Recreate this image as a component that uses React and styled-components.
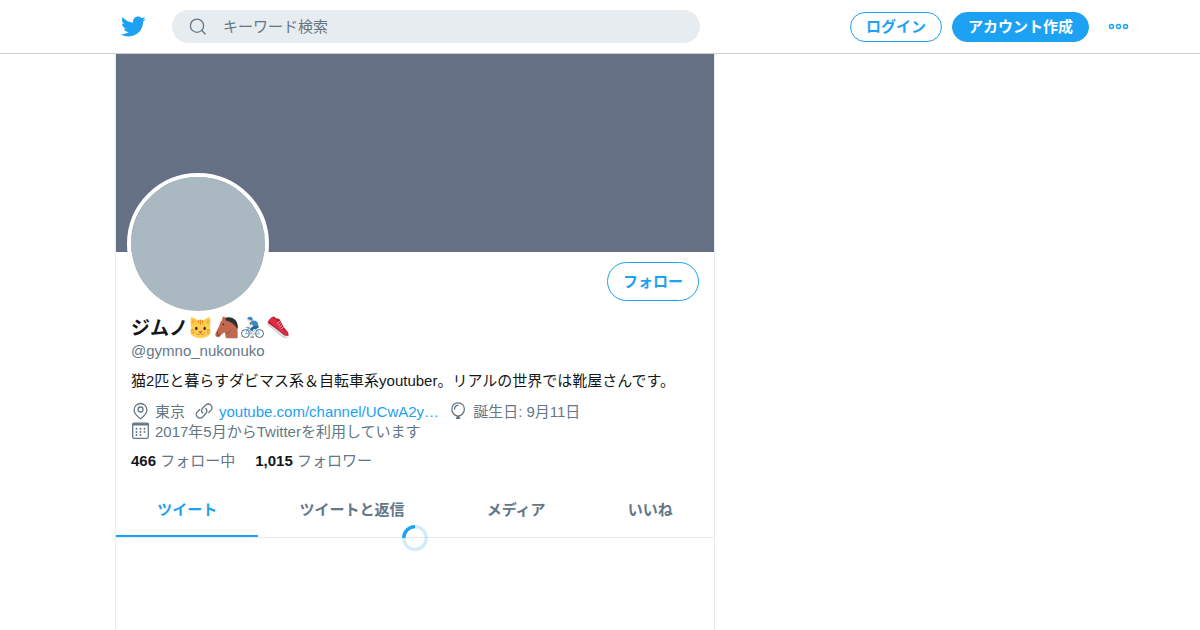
import React from "react";
import styled, { createGlobalStyle } from "styled-components";

const color = {
  blue: "#1da1f2",
  text: "#14171a",
  muted: "#657786",
  line: "#e6ecf0",
  banner: "#657084",
  avatar: "#aab8c2",
};

const GlobalStyle = createGlobalStyle`
  *, *::before, *::after { box-sizing: border-box; }
  body {
    margin: 0;
    background: #fff;
    color: ${color.text};
    font-family: "Liberation Sans", "Noto Sans CJK JP", sans-serif;
    font-size: 15px;
    line-height: 20px;
  }
  a { color: inherit; text-decoration: none; }
  svg { display: block; flex: none; }
`;

const Page = styled.div`
  display: flex;
  flex-direction: column;
  min-height: 100vh;
`;

const Header = styled.header`
  border-bottom: 1px solid #ccd0d3;
`;

const HeaderInner = styled.div`
  display: flex;
  align-items: center;
  max-width: 1060px;
  height: 53px;
  margin: 0 auto;
  padding-left: 50px;
`;

const HomeLink = styled.a`
  margin-right: 26px;
  color: ${color.blue};
`;

const SearchForm = styled.form`
  display: flex;
  flex: 0 1 528px;
  align-items: center;
  min-width: 0;
  height: 33px;
  padding: 0 16px;
  border-radius: 17px;
  background: ${color.line};
  color: ${color.muted};
`;

const SearchInput = styled.input`
  flex: 1;
  min-width: 0;
  margin-left: 15px;
  padding: 0;
  border: 0;
  outline: 0;
  background: transparent;
  color: ${color.text};
  font: inherit;
  &::placeholder { color: ${color.muted}; opacity: 1; }
`;

const HeaderActions = styled.div`
  display: flex;
  align-items: center;
  gap: 10px;
  margin-left: auto;
`;

const Pill = styled.button`
  display: flex;
  align-items: center;
  justify-content: center;
  height: ${(p) => (p.$large ? 39 : 30)}px;
  padding: 0 15px;
  border: 1px solid ${color.blue};
  border-radius: 20px;
  background: ${(p) => (p.$filled ? color.blue : "transparent")};
  color: ${(p) => (p.$filled ? "#fff" : color.blue)};
  font: inherit;
  font-weight: 700;
  white-space: nowrap;
  cursor: pointer;
`;

const MoreButton = styled.button`
  margin-left: 8px;
  padding: 0;
  border: 0;
  background: transparent;
  color: ${color.blue};
  cursor: pointer;
`;

const Main = styled.main`
  display: flex;
  flex: 1;
  width: 100%;
  max-width: 970px;
  margin: 0 auto;
`;

const Column = styled.section`
  flex: 0 1 600px;
  min-width: 0;
  border: solid ${color.line};
  border-width: 0 1px;
`;

const Banner = styled.div`
  height: 198px;
  background: ${color.banner};
`;

const Profile = styled.div`
  padding: 10px 15px 16px;
`;

const ProfileTop = styled.div`
  display: flex;
  align-items: flex-start;
  justify-content: space-between;
`;

const Avatar = styled.div`
  width: 142px;
  height: 142px;
  margin: -89px 0 0 -4px;
  border: 4px solid #fff;
  border-radius: 50%;
  background: ${color.avatar};
  background-clip: padding-box;
`;

const Name = styled.h1`
  display: flex;
  align-items: flex-start;
  gap: 3px;
  margin: 0;
  padding-top: 1px;
  font-size: 19px;
  line-height: 25px;
`;

const NameText = styled.span`
  margin-right: -2px;
`;

const Handle = styled.div`
  color: ${color.muted};
`;

const Bio = styled.p`
  margin: 10px 0 11px;
`;

const Details = styled.div`
  display: flex;
  flex-wrap: wrap;
  column-gap: 10px;
  margin-bottom: 9px;
  color: ${color.muted};
`;

const Detail = styled.span`
  display: flex;
  align-items: flex-start;
  gap: 5px;
`;

const SiteLink = styled.a`
  color: ${color.blue};
`;

const Counts = styled.div`
  display: flex;
  gap: 20px;
  color: ${color.muted};
`;

const CountValue = styled.strong`
  color: ${color.text};
`;

const Tabs = styled.nav`
  display: flex;
  border-bottom: 1px solid ${color.line};
`;

const Tab = styled.a`
  flex: 1 1 auto;
  padding: 13px 15px 15px;
  border-bottom: 2px solid ${(p) => (p.$active ? color.blue : "transparent")};
  color: ${(p) => (p.$active ? color.blue : color.muted)};
  font-weight: 700;
  text-align: center;
  white-space: nowrap;
`;

const Timeline = styled.div`
  display: flex;
  justify-content: center;
  margin-top: -13px;
`;

const TwitterLogo = () => (
  <svg width="26" height="26" viewBox="0 0 24 24" fill="currentColor" aria-hidden="true">
    <path d="M23.643 4.437c-.835.37-1.732.62-2.675.733.962-.576 1.7-1.49 2.048-2.578-.9.534-1.897.922-2.958 1.13-.85-.904-2.06-1.47-3.4-1.47-2.572 0-4.658 2.086-4.658 4.66 0 .364.042.718.12 1.06-3.873-.195-7.304-2.05-9.602-4.868-.4.69-.63 1.49-.63 2.342 0 1.616.823 3.043 2.072 3.878-.764-.025-1.482-.234-2.11-.583v.06c0 2.257 1.605 4.14 3.737 4.568-.392.106-.803.162-1.227.162-.3 0-.593-.028-.877-.082.593 1.85 2.313 3.198 4.352 3.234-1.595 1.25-3.604 1.995-5.786 1.995-.376 0-.747-.022-1.112-.065 2.062 1.323 4.51 2.093 7.14 2.093 8.57 0 13.255-7.098 13.255-13.254 0-.2-.005-.402-.014-.602.91-.658 1.7-1.477 2.323-2.41z" />
  </svg>
);

const LineIcon = ({ size = 19, children }) => (
  <svg
    width={size}
    height={size}
    viewBox={`0 0 ${size} ${size}`}
    fill="none"
    stroke="currentColor"
    strokeWidth="1.300"
    strokeLinecap="round"
    strokeLinejoin="round"
    aria-hidden="true"
  >
    {children}
  </svg>
);

const SearchIcon = () => (
  <LineIcon size={20}>
    <circle cx="9" cy="8.700" r="6.600" />
    <path d="M13.800 13.500L17.200 17" />
  </LineIcon>
);

const MoreIcon = () => (
  <svg width="23" height="22" viewBox="0 0 23 22" fill="none" stroke="currentColor" strokeWidth="1.500" aria-hidden="true">
    <circle cx="4.500" cy="10.500" r="2" />
    <circle cx="11.500" cy="10.500" r="2" />
    <circle cx="18.500" cy="10.500" r="2" />
  </svg>
);

const PinIcon = () => (
  <LineIcon>
    <path d="M9.500 1.500a6.400 6.400 0 0 0-6.400 6.400c0 4.200 3.600 6.600 6.400 8.800 2.800-2.200 6.400-4.600 6.400-8.800a6.400 6.400 0 0 0-6.400-6.400z" />
    <circle cx="9.500" cy="7.500" r="2.500" />
  </LineIcon>
);

const LinkIcon = () => (
  <LineIcon>
    <path d="M7.600 11a3.700 3.700 0 0 1 .1-5l2.900-2.900a3.700 3.700 0 0 1 5.300 0 3.700 3.700 0 0 1 0 5.300l-2.100 2.100" />
    <path d="M10.800 6.500a3.700 3.700 0 0 1-.1 5l-3 3.500a3.700 3.700 0 0 1-5.300 0 3.700 3.700 0 0 1 0-5.300l2.200-2.200" />
  </LineIcon>
);

const BalloonIcon = () => (
  <LineIcon>
    <path d="M9.100.8c-3.700 0-6.300 2.700-6.300 6.300 0 3.900 3 7 6.300 7s6.300-3.100 6.300-7c0-3.600-2.600-6.300-6.300-6.300z" />
    <path d="M5.500 7.200c0-2.200 1.400-3.800 3.500-3.900" />
    <path d="M8.700 14.500l-1.200 1.800h3.200l-1.200-1.800z" fill="currentColor" />
  </LineIcon>
);

const CalendarIcon = () => (
  <LineIcon>
    <rect x="1.700" y="1.200" width="15.600" height="15.100" rx="1.500" />
    <path d="M2 2.300h15" strokeWidth="2.200" />
    <path
      d="M5.500 6.700h.01M9.500 6.700h.01M13.500 6.700h.01M5.500 9.900h.01M9.500 9.900h.01M13.500 9.900h.01M5.500 13.100h.01M9.500 13.100h.01"
      strokeWidth="2"
    />
  </LineIcon>
);

const Emoji = ({ label, children }) => (
  <svg width="23" height="23" viewBox="0 0 36 36" role="img" aria-label={label}>
    {children}
  </svg>
);

const CatEmoji = () => (
  <Emoji label="猫">
    <path fill="#ffcc4d" d="M32.300 19C34.300 12 34 2.500 32 2c-1.700-.5-6.500 2.200-9 4.500-3-.7-7-.7-10 0C10.500 4.200 5.700 1.500 4 2 2 2.500 1.700 12 3.700 19 2.200 21.500 1.800 24.500 2.800 27 5 32 11 34.500 18 34.500S31 32 33.200 27c1-2.500.6-5.500-.9-8z" />
    <path fill="#e08a22" opacity=".35" d="M5 5c2 .7 4 2.300 5.300 4L5.500 13C4.500 10 4.500 7 5 5zm26 0c-2 .7-4 2.300-5.300 4l4.800 4c1-3 1-6 .5-8z" />
    <path fill="none" stroke="#f18f26" strokeWidth="1.700" strokeLinecap="round" d="M18 6.500V13M14.500 7l.5 4M21.500 7l-.5 4M3.500 22l4 .5M32.500 22l-4 .5M4 27l3.500-1M32 27l-3.500-1" />
    <ellipse cx="11.500" cy="19.500" rx="1.900" ry="2.500" fill="#292f33" />
    <ellipse cx="24.500" cy="19.500" rx="1.900" ry="2.500" fill="#292f33" />
    <path fill="#e75a70" d="M15.200 23.500h5.600c.6 1.400-1.300 3-2.800 3.400-1.500-.4-3.400-2-2.800-3.400z" />
    <path fill="none" stroke="#c77538" strokeWidth="1" strokeLinecap="round" d="M18 27c-.5 2.500-4 2.800-6 1M18 27c.5 2.500 4 2.800 6 1" />
  </Emoji>
);

const HorseEmoji = () => (
  <Emoji label="馬">
    <path fill="#292f33" d="M15 3c6-2.500 14-.5 17.500 4 2.500 3.500 3.500 8 3 13L26 14z" />
    <path fill="#c1694f" d="M13 1c1.700-.5 3 1.500 3.800 3.500C25 4.500 31 8 34 15c1.500 5 1.700 13 1.500 20H17.500c-2-3-.3-7-2-9-2 .5-4 1.500-5.500 3.500-1.500 2.200-3.500 4.500-6.500 3.500C.5 32 0 29 1 26.500c1.500-3.500 4-7 5.500-10.500C7.500 12 8 9 11 6.500 11 4 11.500 2 13 1z" />
    <path fill="#292f33" d="M16.500 4.300C23 2.500 29.500 5 32.500 9.500c2 3 2.700 7 2.500 10.500C31.500 14 26.500 9 16.500 6.500z" />
    <path fill="#8b4c39" d="M15 26c4 1.200 8-1 10-5.500.5 4-2 8-8 9z" opacity=".5" />
    <circle cx="13" cy="13" r="1.400" fill="#292f33" />
    <ellipse cx="4" cy="27" rx=".9" ry="1.400" fill="#662113" />
    <path fill="none" stroke="#662113" strokeWidth="1" strokeLinecap="round" d="M3.500 30.500c2 .2 3.500-.6 4.500-2" />
  </Emoji>
);

const CyclistEmoji = () => (
  <Emoji label="自転車に乗る人">
    <g fill="none" stroke="#4c5a63" strokeWidth="1.500">
      <circle cx="7" cy="27.500" r="6.200" />
      <circle cx="29" cy="27.500" r="6.200" />
    </g>
    <path fill="none" stroke="#50a5e6" strokeWidth="1.300" strokeLinejoin="round" d="M7 27.500l4-8h13l-6.500 8.500zM24 19.500l5 8M11 19.500l6.500 8.500H29" />
    <path fill="none" stroke="#292f33" strokeWidth="1.400" strokeLinecap="round" d="M9 18h3.500M22.500 17H27M15.500 33h4" />
    <path fill="none" stroke="#f7dece" strokeWidth="2.700" strokeLinecap="round" strokeLinejoin="round" d="M17 11l-3 5-3.500 1M16.500 20.500l2.500 4-1.500 6" />
    <path fill="#3b88c3" d="M16.500 8c4-2 8-.5 9.500 2.500 1 2 1.500 4.500 1 7l-7.500.5-2-5.500-2.700 1.500-1.800-2.500z" />
    <path fill="#226699" d="M19 16l8-.5c.8 2.500-.5 4-3 4.500l-5 1-1 3-3.500-1.500c0-3 1.500-5 4.500-6.500z" />
    <circle cx="13.500" cy="6.300" r="3.500" fill="#f7dece" />
    <path fill="#3b88c3" d="M9.500 4.300C10.500 1.500 13.500.3 16 1.500c2.500 1.200 3 4 1.500 6.500z" />
  </Emoji>
);

const ShoeEmoji = () => (
  <Emoji label="スニーカー">
    <path fill="#be1931" d="M1.500 9C3 5.500 6 2 9.500 1c2-.3 2.500 1.500 4.500 2.500 1.500.7 4-.2 5.500 1.500L27 18.500l5.500 6.500c1.500 2 1.500 5 .5 7.500L29 33 2 13c-1-1.300-1-2.700-.5-4z" />
    <path fill="#dd2e44" d="M3.500 8.500C4.500 6.500 7 3 9.500 2.500c1.500 1.500 3 3.500 5.500 4l9 13.500 7 6c1 1.500 1 3 .7 4.500L25.500 28z" />
    <path fill="#e1e8ed" d="M1 10.500C9 16 17 22 24 28c3 2.500 6 3.300 9.300 2.800 0 1.700-.8 3.200-2.800 3.700-4.500.3-8-2-11.500-5L1.500 14c-1-1-1.200-2.500-.5-3.500z" />
    <path fill="none" stroke="#aab8c2" strokeWidth="1" d="M1.200 13C9 19 15.500 24.500 21.500 30c3 2.500 6 4 9.500 4" />
    <path fill="none" stroke="#f4c3cb" strokeWidth="1.200" strokeLinecap="round" d="M16 11l4-2.500M18 14l4-2.500M20 17l4-2.500M22 20l4-2.500" />
  </Emoji>
);

const Spinner = () => (
  <svg width="26" height="26" viewBox="0 0 26 26" fill="none" stroke={color.blue} strokeWidth="3.250" role="img" aria-label="読み込み中">
    <circle cx="13" cy="13" r="11.300" opacity=".2" />
    <path d="M1.700 13A11.300 11.300 0 0 1 13 1.700" />
  </svg>
);

const tabs = ["ツイート", "ツイートと返信", "メディア", "いいね"];

const counts = [
  { value: "466", label: "フォロー中" },
  { value: "1,015", label: "フォロワー" },
];

export default function App() {
  return (
    <Page>
      <GlobalStyle />
      <Header>
        <HeaderInner>
          <HomeLink href="#" aria-label="Twitter">
            <TwitterLogo />
          </HomeLink>
          <SearchForm role="search">
            <SearchIcon />
            <SearchInput type="text" placeholder="キーワード検索" aria-label="キーワード検索" />
          </SearchForm>
          <HeaderActions>
            <Pill as="a" href="#login">ログイン</Pill>
            <Pill as="a" href="#signup" $filled>アカウント作成</Pill>
            <MoreButton type="button" aria-label="もっと見る">
              <MoreIcon />
            </MoreButton>
          </HeaderActions>
        </HeaderInner>
      </Header>
      <Main>
        <Column>
          <Banner />
          <Profile>
            <ProfileTop>
              <Avatar />
              <Pill type="button" $large>フォロー</Pill>
            </ProfileTop>
            <Name>
              <NameText>ジムノ</NameText>
              <CatEmoji />
              <HorseEmoji />
              <CyclistEmoji />
              <ShoeEmoji />
            </Name>
            <Handle>@gymno_nukonuko</Handle>
            <Bio>猫2匹と暮らすダビマス系＆自転車系youtuber。リアルの世界では靴屋さんです。</Bio>
            <Details>
              <Detail><PinIcon />東京</Detail>
              <Detail>
                <LinkIcon />
                <SiteLink href="#site">youtube.com/channel/UCwA2y…</SiteLink>
              </Detail>
              <Detail><BalloonIcon />誕生日: 9月11日</Detail>
              <Detail><CalendarIcon />2017年5月からTwitterを利用しています</Detail>
            </Details>
            <Counts>
              {counts.map((c) => (
                <a key={c.label} href="#follow">
                  <CountValue>{c.value}</CountValue> {c.label}
                </a>
              ))}
            </Counts>
          </Profile>
          <Tabs>
            {tabs.map((label, i) => (
              <Tab key={label} href="#tab" $active={i === 0}>{label}</Tab>
            ))}
          </Tabs>
          <Timeline>
            <Spinner />
          </Timeline>
        </Column>
      </Main>
    </Page>
  );
}
